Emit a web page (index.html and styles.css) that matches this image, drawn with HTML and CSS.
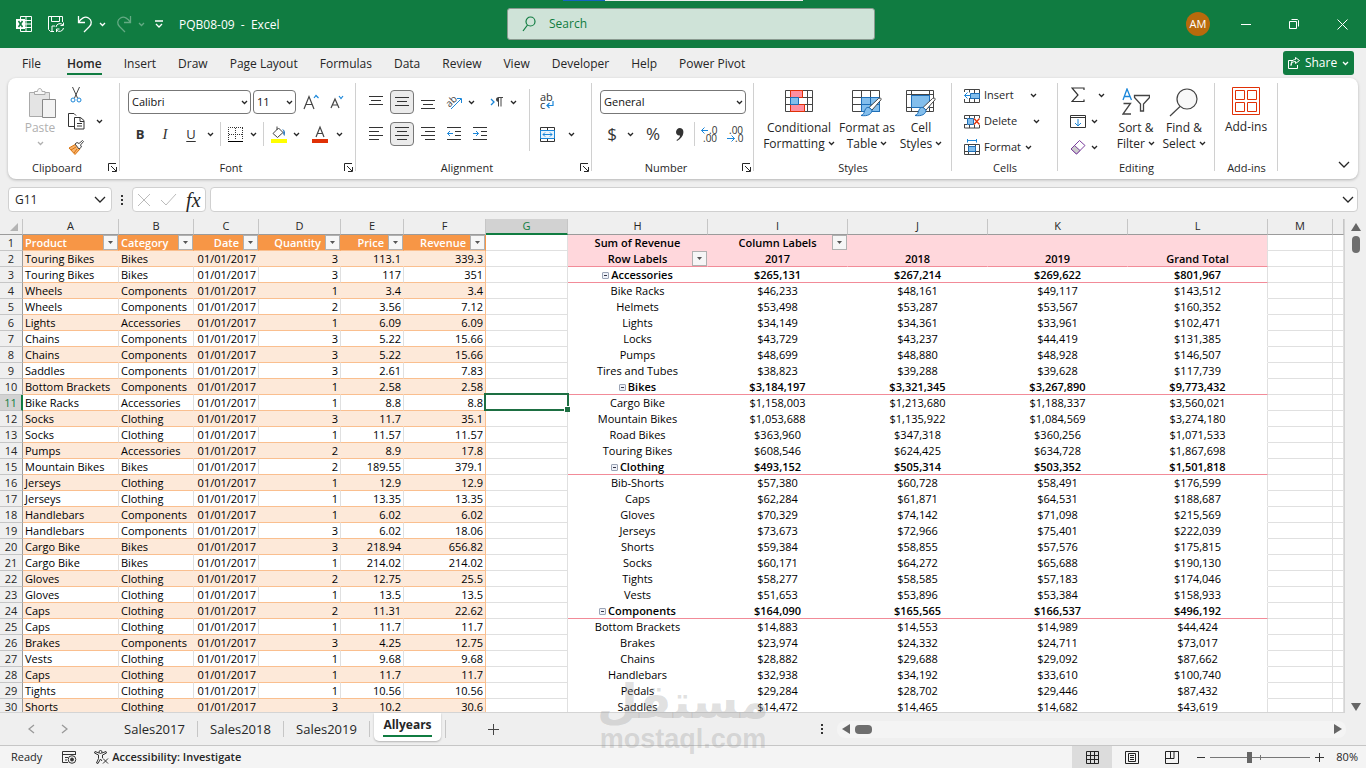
FILE: index.html
```html
<!DOCTYPE html>
<html lang="en">
<head>
    <meta charset="UTF-8">
    <meta name="viewport" content="width=device-width, initial-scale=1.0">
    <title>PQB08-09 - Excel</title>
    <link rel="stylesheet" href="styles.css">
</head>
<body>

<!-- Shared icons -->
<svg class="defs" aria-hidden="true">
    <symbol id="chev" viewBox="0 0 7 5"><path d="M1 1l2.5 2.5L6 1" fill="none" stroke="currentColor" stroke-width="1.3"/></symbol>
    <symbol id="chev-big" viewBox="0 0 12 7"><path d="M1 1l5 5 5-5" fill="none" stroke="currentColor" stroke-width="1.3"/></symbol>
    <symbol id="launch" viewBox="0 0 9 9"><path d="M.5 8V.5H8M3 3l5 5M8.500 4v4.500H4" fill="none" stroke="currentColor"/></symbol>
    <symbol id="brush" viewBox="0 0 22 20"><path d="M20 1c1 0 1.500 1 .8 2L12 13l-3-2.500L18.500 1.500z" fill="#fff" stroke="#444"/><path d="M9 10.500l3 2.500c0 4-4 6.500-11 5.500 3-1 3-3 4-5.500s2.500-3 4-2.500z" fill="#83beec" stroke="#1e6fb8"/></symbol>
</svg>

<header class="titlebar">
    <div class="screen-bar"><i></i></div>
    <div class="quick">
        <svg class="app" width="16" height="16" viewBox="0 0 16 16"><path d="M4.500 3V.5h11v15h-11V13M10 .5v15M4 4.500h11.500M4 8h11.500M4 11.500h11.500" fill="none" stroke="#fff"/><path d="M0 3h9v10H0z" fill="#fff"/><path d="M2.500 5l4 6M6.500 5l-4 6" stroke="#107c41" stroke-width="1.500"/></svg>
        <button aria-label="Save" class="save"><svg width="16" height="16" viewBox="0 0 16 16" fill="none" stroke="#fff"><path d="M6 15.500H2.500l-2-2V.5h14V6M3.500.5v5h8v-5M4 15v-5h3M8 11a4 4 0 0 1 7-2M15.500 6.500v3h-3M15.500 12a4 4 0 0 1-7 2M8.500 16v-3h3"/></svg></button>
        <button aria-label="Undo"><svg width="16" height="18" viewBox="0 0 16 18" fill="none" stroke="#fff" stroke-width="1.300"><path d="M1.500 1v6.500H8M1.500 7.500C4 3 8 1 11.500 3s3.500 6 1 8.500L7 17"/></svg></button>
        <button aria-label="Undo list" class="arrow"><svg width="7" height="5"><use href="#chev"/></svg></button>
        <button aria-label="Redo" class="faded"><svg width="16" height="18" viewBox="0 0 16 18" fill="none" stroke="#fff" stroke-width="1.300"><path d="M14.500 1v6.500H8M14.500 7.500C12 3 8 1 4.500 3s-3.500 6-1 8.500L9 17"/></svg></button>
        <button aria-label="Redo list" class="arrow faded"><svg width="7" height="5"><use href="#chev"/></svg></button>
        <button aria-label="Customize toolbar" class="customize"><svg width="8" height="8" viewBox="0 0 8 8" fill="none" stroke="#fff" stroke-width="1.300"><path d="M0 1h8M1 4l3 3 3-3"/></svg></button>
        <span class="doc-name">PQB08-09&nbsp; -&nbsp; Excel</span>
    </div>
    <label class="search">
        <svg width="14" height="16" viewBox="0 0 14 16" fill="none" stroke="#107c41" stroke-width="1.200"><circle cx="8.500" cy="5.500" r="4.500"/><path d="M5.500 9L1 15"/></svg>
        <input type="search" placeholder="Search" aria-label="Search">
    </label>
    <div class="window-tools">
        <button aria-label="Account"><span class="avatar">AM</span></button>
        <button aria-label="Minimize"><svg width="10" height="10" stroke="#fff"><path d="M0 5.500h10"/></svg></button>
        <button aria-label="Restore"><svg width="10" height="10" fill="none" stroke="#fff"><path d="M.5 2.500h7v7h-7zM2.500.5h6l1 1v6"/></svg></button>
        <button aria-label="Close"><svg width="11" height="11" stroke="#fff"><path d="M.5.5l10 10M10.500.5l-10 10"/></svg></button>
    </div>
</header>

<nav class="menu">
    <a href="#">File</a>
    <a href="#" class="current">Home</a>
    <a href="#">Insert</a>
    <a href="#">Draw</a>
    <a href="#">Page Layout</a>
    <a href="#">Formulas</a>
    <a href="#">Data</a>
    <a href="#">Review</a>
    <a href="#">View</a>
    <a href="#">Developer</a>
    <a href="#">Help</a>
    <a href="#">Power Pivot</a>
    <button class="share"><svg width="12" height="12" viewBox="0 0 12 12" fill="none" stroke="#fff"><path d="M5 3.500H.5v8h9V8M3 8.500C3.500 5.500 5 4.500 7.500 4.500V6.500L11.500 3.500 7.500.5v2C4.500 2.500 3 5 3 8.500z"/></svg>Share<svg width="7" height="5"><use href="#chev"/></svg></button>
</nav>

<section class="ribbon">
    <div class="group clipboard">
        <div class="tools">
            <button class="big disabled">
                <svg width="28" height="32" viewBox="0 0 28 32"><path d="M.5 4.500h20v24H.5z" fill="#e4e4e4" stroke="#aaa"/><path d="M5.500 6.500v-3h3C8.500-.5 13-.5 13 3.500h3v3z" fill="#f7f7f7" stroke="#aaa"/><path d="M13.500 11.500h13v18h-13z" fill="#f3f3f3" stroke="#888"/></svg>
                <span>Paste</span>
                <svg width="7" height="16"><use href="#chev"/></svg>
            </button>
            <div class="stack">
                <div><button class="icon" aria-label="Cut"><svg width="12" height="16" viewBox="0 0 12 16" fill="none" stroke="#444"><path d="M2.500 0l5 11M9.500 0l-5 11"/><g stroke="#1a86d9"><circle cx="3" cy="13" r="2"/><circle cx="9" cy="13" r="2"/></g></svg></button></div>
                <div><button class="icon" aria-label="Copy"><svg width="17" height="17" viewBox="0 0 17 17" fill="none" stroke="#333"><path d="M6 13.500H.5V.5H6l2 2M6.500 4.500h6l3.500 3v8.500H6.500zM12 4.500v4h4M9 10.500h5M9 13h5"/></svg></button><button class="arrow" aria-label="Copy options"><svg width="7" height="5"><use href="#chev"/></svg></button></div>
                <div><button class="icon" aria-label="Format Painter"><svg width="16" height="15" viewBox="0 0 16 15"><path d="M8 4l4 5-5 5.500L1 8z" fill="#f7b26b" stroke="#d9730d"/><path d="M3 10l5-3M6 13l3-4" stroke="#d9730d"/><path d="M7 4l2-1.500 2 1L14.500.5l1 1L12.500 5l1 2L11 9z" fill="#fff" stroke="#444"/></svg></button></div>
            </div>
        </div>
        <div class="caption">Clipboard<button aria-label="Clipboard settings"><svg width="9" height="9"><use href="#launch"/></svg></button></div>
    </div>

    <div class="group font">
        <div class="tools rows">
            <div class="row">
                <span class="drop face"><select aria-label="Font"><option>Calibri</option></select><svg width="7" height="5"><use href="#chev"/></svg></span>
                <span class="drop size"><select aria-label="Font size"><option>11</option></select><svg width="7" height="5"><use href="#chev"/></svg></span>
                <button class="icon grow" aria-label="Increase font size"><svg width="16" height="16" viewBox="0 0 16 16" fill="none" stroke="#444" stroke-width="1.200"><path d="M1 15L6 2.500 11 15M3 10.500h6"/><path d="M11 4l2-2.500L15.500 4" stroke="#1a86d9"/></svg></button>
                <button class="icon" aria-label="Decrease font size"><svg width="14" height="14" viewBox="0 0 14 14" fill="none" stroke="#444" stroke-width="1.200"><path d="M1 13L5 4l4 9M2.500 10h5"/><path d="M9 1l2 2.500L13 1" stroke="#1a86d9"/></svg></button>
            </div>
            <div class="row">
                <button class="icon bold">B</button>
                <button class="icon italic">I</button>
                <button class="icon under">U</button>
                <button class="arrow" aria-label="Underline style"><svg width="7" height="5"><use href="#chev"/></svg></button>
                <span class="bar"></span>
                <button class="icon tight" aria-label="Borders"><svg width="15" height="15" viewBox="0 0 15 15" fill="none" stroke="#333"><path d="M.5 13V.5H15M14.500 1v12M7.500 1v12M1 7.500h13" stroke-dasharray="1 1"/><path d="M0 14.500h15" stroke="#000"/></svg></button>
                <button class="arrow" aria-label="Border options"><svg width="7" height="5"><use href="#chev"/></svg></button>
                <span class="bar"></span>
                <button class="icon tight" aria-label="Fill color"><svg width="16" height="17" viewBox="0 0 16 17"><path d="M2 7.500L7.500 2 12 6.500 6.500 11.500zM6 4V.5" fill="#fff" stroke="#444"/><path d="M11 3c3 1 3.500 3 2.500 7-1.500-1-1.500-3-1-5z" fill="#1e6fb8"/><path d="M0 13h16v4H0z" fill="#ff0"/></svg></button>
                <button class="arrow" aria-label="Fill options"><svg width="7" height="5"><use href="#chev"/></svg></button>
                <button class="icon ink" aria-label="Font color"><svg width="16" height="17" viewBox="0 0 16 17"><path d="M4 11L8 1l4 10M5.500 7.500h5" fill="none" stroke="#444" stroke-width="1.200"/><path d="M0 13h16v4H0z" fill="#e03006"/></svg></button>
                <button class="arrow" aria-label="Font color options"><svg width="7" height="5"><use href="#chev"/></svg></button>
            </div>
        </div>
        <div class="caption">Font<button aria-label="Font settings"><svg width="9" height="9"><use href="#launch"/></svg></button></div>
    </div>

    <div class="group alignment">
        <div class="tools">
            <div class="rows">
                <div class="row">
                    <button class="icon" aria-label="Top align"><svg width="14" height="14" stroke="#333"><path d="M0 1.500h14M2 5.500h10M0 9.500h14"/></svg></button>
                    <button class="icon on" aria-label="Middle align"><svg width="14" height="14" stroke="#333"><path d="M0 2.500h14M2 6.500h10M0 10.500h14"/></svg></button>
                    <button class="icon" aria-label="Bottom align"><svg width="14" height="14" stroke="#333"><path d="M0 5.500h14M2 9.500h10M0 13.500h14"/></svg></button>
                    <button class="icon" aria-label="Orientation"><svg width="17" height="16" viewBox="0 0 17 16"><text x="0" y="11" font-size="10" fill="#444" transform="rotate(-45 5 8)">ab</text><path d="M5 15L15 5M11 4.500h4.500V9" fill="none" stroke="#1a86d9"/></svg></button>
                    <button class="arrow" aria-label="Orientation options"><svg width="7" height="5"><use href="#chev"/></svg></button>
                    <button class="icon para" aria-label="Text direction"><svg width="13" height="10" viewBox="0 0 13 10" fill="none"><path d="M1 2l3 3-3 3" stroke="#1a86d9" stroke-width="1.300"/><path d="M8.500 9.500V.5H13M11 .5v9" stroke="#444"/><path d="M9 0C5 0 5 5 9 5z" fill="#444"/></svg></button>
                    <button class="arrow" aria-label="Direction options"><svg width="7" height="5"><use href="#chev"/></svg></button>
                </div>
                <div class="row">
                    <button class="icon" aria-label="Align left"><svg width="14" height="14" stroke="#333"><path d="M0 .5h14M0 4.500h10M0 8.500h14M0 12.500h10"/></svg></button>
                    <button class="icon on" aria-label="Center"><svg width="14" height="14" stroke="#333"><path d="M0 .5h14M2 4.500h10M0 8.500h14M2 12.500h10"/></svg></button>
                    <button class="icon" aria-label="Align right"><svg width="14" height="14" stroke="#333"><path d="M0 .5h14M4 4.500h10M0 8.500h14M4 12.500h10"/></svg></button>
                    <button class="icon" aria-label="Decrease indent"><svg width="14" height="14" fill="none" stroke="#333"><path d="M0 .5h14M8 4.500h6M8 8.500h6M0 12.500h14"/><path d="M6 6.500H.5M3 4L.5 6.500 3 9" stroke="#1a86d9"/></svg></button>
                    <button class="icon" aria-label="Increase indent"><svg width="14" height="14" fill="none" stroke="#333"><path d="M0 .5h14M8 4.500h6M8 8.500h6M0 12.500h14"/><path d="M0 6.500h5.500M3 4l2.500 2.500L3 9" stroke="#1a86d9"/></svg></button>
                </div>
            </div>
            <span class="bar tall"></span>
            <div class="rows wrap-col">
                <div class="row"><button class="icon wrap" aria-label="Wrap text"><svg width="16" height="18" viewBox="0 0 16 18"><text x="1" y="8" font-size="11" fill="#333">ab</text><text x="1" y="16" font-size="11" fill="#333">c</text><path d="M14 8v4.500H8M10.500 10L8 12.500l2.500 2.500" fill="none" stroke="#1a86d9" stroke-width="1.200"/></svg></button></div>
                <div class="row"><button class="icon" aria-label="Merge and center"><svg width="15" height="15" viewBox="0 0 15 15" fill="none" stroke="#333"><path d="M.5.500h14v14H.5zM7.500.5v3M7.500 11.500v3"/><path d="M.5 3.500h14v8H.5z" fill="#e9f4fd" stroke="#1a86d9"/><path d="M3 7.500h9M5 5.500l-2 2 2 2M10 5.500l2 2-2 2" stroke="#1a86d9"/></svg></button><button class="arrow far" aria-label="Merge options"><svg width="7" height="5"><use href="#chev"/></svg></button></div>
            </div>
        </div>
        <div class="caption">Alignment<button aria-label="Alignment settings"><svg width="9" height="9"><use href="#launch"/></svg></button></div>
    </div>

    <div class="group number">
        <div class="tools rows">
            <div class="row"><span class="drop format"><select aria-label="Number format"><option>General</option></select><svg width="7" height="5"><use href="#chev"/></svg></span></div>
            <div class="row">
                <button class="icon glyph">$</button>
                <button class="arrow" aria-label="Currency options"><svg width="7" height="5"><use href="#chev"/></svg></button>
                <button class="icon glyph percent">%</button>
                <button class="icon" aria-label="Comma style"><svg width="8" height="13" viewBox="0 0 8 13"><path d="M4 0c5 0 5 9-3 13l-.5-1C3 10.500 4 9 4 7.500-1.500 8-1 0 4 0z" fill="#333"/></svg></button>
                <span class="bar thin"></span>
                <button class="icon" aria-label="Increase decimal"><svg width="16" height="17" viewBox="0 0 16 17" font-size="10" fill="#333"><text x="8" y="8">.0</text><text x="2" y="16">.00</text><path d="M7 4.500H.5M3.500 1.500l-3 3 3 3" fill="none" stroke="#1a86d9"/></svg></button>
                <button class="icon" aria-label="Decrease decimal"><svg width="16" height="17" viewBox="0 0 16 17" font-size="10" fill="#333"><text x="2" y="8">.00</text><text x="8" y="16">.0</text><path d="M0 12.500h7.500M4.500 9.500l3 3-3 3" fill="none" stroke="#1a86d9"/></svg></button>
            </div>
        </div>
        <div class="caption">Number<button aria-label="Number settings"><svg width="9" height="9"><use href="#launch"/></svg></button></div>
    </div>

    <div class="group styles">
        <div class="tools">
            <button class="big">
                <svg width="28" height="32" viewBox="0 0 28 32"><path d="M.5 2.500h27v21H.5zM.5 9.500h27M.5 16.500h27M5.500 2.500v21M12.500 2.500v21M22.500 2.500v21" fill="none" stroke="#444"/><path d="M5.500 2.500h12v7h-12zM5.500 16.500h14v7h-14z" fill="#ff8fa0" stroke="#e03006"/><path d="M5.500 9.500h8v7h-8z" fill="#83beec" stroke="#1e6fb8"/></svg>
                <span>Conditional<br>Formatting <svg width="7" height="5"><use href="#chev"/></svg></span>
            </button>
            <button class="big">
                <svg width="31" height="32" viewBox="0 0 31 32"><path d="M9.500 9.500h18v14h-18z" fill="#83beec"/><path d="M.5 2.500h27v21H.5zM.5 9.500h27M.5 16.500h27M9.500 2.500v21M18.500 2.500v21" fill="none" stroke="#444"/><path d="M9.500 9.500h18v14h-18zM9.500 16.500h18M18.500 9.500v14" fill="none" stroke="#1e6fb8"/><use href="#brush" x="8" y="9" width="22" height="20"/></svg>
                <span>Format as<br>Table <svg width="7" height="5"><use href="#chev"/></svg></span>
            </button>
            <button class="big">
                <svg width="31" height="32" viewBox="0 0 31 32"><path d="M.5 2.500h27v21H.5zM.5 6.500h27M.5 19.500h27M5.500 2.500v21M23.500 2.500v21" fill="#fff" stroke="#444"/><path d="M5.500 7.500h18v12h-18z" fill="#83beec" stroke="#1e6fb8"/><use href="#brush" x="8" y="9" width="22" height="20"/></svg>
                <span>Cell<br>Styles <svg width="7" height="5"><use href="#chev"/></svg></span>
            </button>
        </div>
        <div class="caption">Styles</div>
    </div>

    <div class="group cells">
        <div class="tools stack">
            <button><svg width="16" height="15" viewBox="0 0 16 15" fill="none" stroke="#444"><path d="M.5 4V1.500h15v13H.5V11M5.500 1.500v3M10.500 1.500v13M5.500 11v3.500M5 10.500h11"/><path d="M6.500 5.500h9v5h-9z" fill="#83beec" stroke="#1e6fb8"/><path d="M7 7.500H.5M3.500 4.500l-3 3 3 3" stroke="#1a86d9"/></svg>Insert<svg class="far" width="7" height="5"><use href="#chev"/></svg></button>
            <button><svg width="16" height="15" viewBox="0 0 16 15" fill="none" stroke="#444"><path d="M.5 4V1.500h15V4M.5 10.500v3.500h15v-3M5.500 1.500V4M10.500 1.500V4M5.500 11v3M10.500 11v3M0 4.500h3M0 10.500h3"/><path d="M3.500 4.500h6v6h-6z" fill="#83beec" stroke="#1e6fb8"/><path d="M10 4.500l5.500 6M15.500 4.500l-5.500 6" stroke="#e03006" stroke-width="1.300"/></svg>Delete<svg class="far" width="7" height="5"><use href="#chev"/></svg></button>
            <button><svg width="16" height="16" viewBox="0 0 16 16" fill="none" stroke="#444"><path d="M.5 5.500h15v10H.5zM4.500 5v11M11.500 5v11M0 12.500h16"/><path d="M4.500 7.500h7v5h-7z" fill="#83beec" stroke="#1e6fb8"/><path d="M3.500 0v3.500M12.500 0v3.500M3.500 1.500h9" stroke="#1a86d9"/></svg>Format<svg width="7" height="5"><use href="#chev"/></svg></button>
        </div>
        <div class="caption">Cells</div>
    </div>

    <div class="group editing">
        <div class="tools">
            <div class="stack">
                <button class="sum" aria-label="AutoSum"><svg width="14" height="16" viewBox="0 0 14 16" fill="none" stroke="#333" stroke-width="1.200"><path d="M13 3V1H1l6 7-6 6.500h12v-2"/></svg><svg width="7" height="5"><use href="#chev"/></svg></button>
                <button aria-label="Fill"><svg width="16" height="15" viewBox="0 0 16 15" fill="none" stroke="#333"><path d="M.5 1.500h15v12H.5zM.5 3.500h15"/><path d="M8 5v7M5 9l3 3 3-3" stroke="#1a86d9"/></svg><svg width="7" height="5"><use href="#chev"/></svg></button>
                <button aria-label="Clear"><svg width="16" height="15" viewBox="0 0 16 15" fill="#fff" stroke="#7a3e9d"><path d="M9.500.5L15 5.500 6.500 14 1 9z"/><path d="M4.500 5.500L10 10.500 6.500 14 1 9z" fill="#ccc"/></svg><svg width="7" height="5"><use href="#chev"/></svg></button>
            </div>
            <button class="big">
                <svg width="28" height="32" viewBox="0 0 28 32" fill="none" stroke="#444" stroke-width="1.300"><path d="M1 12L5 1l4.500 11M2.500 8.500h5.500" stroke="#1a86d9"/><path d="M1.500 15.500h7L1 26h8M12.500 7.500h15v2L21.500 16v7h-3v-7l-6-6.500z"/></svg>
                <span>Sort &amp;<br>Filter <svg width="7" height="5"><use href="#chev"/></svg></span>
            </button>
            <button class="big">
                <svg width="30" height="32" viewBox="0 0 30 32" fill="none" stroke="#444" stroke-width="1.200"><circle cx="18" cy="11" r="10" fill="#f8f8f8"/><path d="M11 18.500L1 28"/></svg>
                <span>Find &amp;<br>Select <svg width="7" height="5"><use href="#chev"/></svg></span>
            </button>
        </div>
        <div class="caption">Editing</div>
    </div>

    <div class="group addins">
        <div class="tools">
            <button class="big">
                <svg width="28" height="32" viewBox="0 0 28 32" fill="none" stroke="#e03006"><path d="M.5.5h27v27H.5zM3.500 3.500h9v9h-9zM15.500 3.500h9v9h-9zM3.500 15.500h9v9h-9zM15.500 15.500h9v9h-9z"/></svg>
                <span>Add-ins</span>
            </button>
        </div>
        <div class="caption">Add-ins</div>
    </div>
    <button class="collapse" aria-label="Collapse ribbon"><svg width="12" height="7"><use href="#chev-big"/></svg></button>
</section>

<section class="formula">
    <label class="name-box"><input type="text" value="G11" aria-label="Name box"><svg width="12" height="7"><use href="#chev-big"/></svg></label>
    <span class="dots"><i></i><i></i><i></i></span>
    <div class="entry">
        <button aria-label="Cancel"><svg width="14" height="14" stroke="#bbb"><path d="M1 1l12 12M13 1L1 13"/></svg></button>
        <button aria-label="Enter"><svg width="17" height="13" fill="none" stroke="#bbb"><path d="M1 7l5 5L16 1"/></svg></button>
        <button class="fx">fx</button>
    </div>
    <label class="formula-box"><input type="text" aria-label="Formula"><svg width="12" height="7"><use href="#chev-big"/></svg></label>
</section>

<main class="workbook">
    <div class="sheet">
        <table>
            <colgroup>
                <col class="c-num"><col class="c-a"><col class="c-b"><col class="c-c"><col class="c-d"><col class="c-e"><col class="c-d"><col class="c-d">
                <col class="c-pivot"><col class="c-pivot"><col class="c-pivot"><col class="c-pivot"><col class="c-pivot"><col class="c-c"><col>
            </colgroup>
            <thead>
                <tr>
                    <th class="corner"><svg width="8" height="8"><path d="M8 0v8H0z" fill="#b4b4b4"/></svg></th>
                    <th>A</th><th>B</th><th>C</th><th>D</th><th>E</th><th>F</th><th class="active">G</th>
                    <th>H</th><th>I</th><th>J</th><th>K</th><th>L</th><th>M</th><th></th>
                </tr>
            </thead>
            <tbody id="cells"></tbody>
        </table>
    </div>
    <div class="vscroll">
        <svg width="10" height="8"><path d="M5 0l5 8H0z" fill="#666"/></svg>
        <span class="thumb"></span>
        <svg class="end" width="10" height="8"><path d="M0 0h10L5 8z" fill="#666"/></svg>
    </div>
</main>

<footer class="tabs">
    <button class="step" aria-label="Previous sheet"><svg width="7" height="10" fill="none" stroke="#999" stroke-width="1.300"><path d="M6 1L1 5l5 4"/></svg></button>
    <button class="step" aria-label="Next sheet"><svg width="7" height="10" fill="none" stroke="#999" stroke-width="1.300"><path d="M1 1l5 4-5 4"/></svg></button>
    <div class="sheet-tabs">
        <a href="#">Sales2017</a>
        <a href="#">Sales2018</a>
        <a href="#">Sales2019</a>
        <a href="#" class="current"><span>Allyears</span></a>
        <i class="tab-end"></i>
    </div>
    <button class="add" aria-label="New sheet"><svg width="11" height="11" stroke="#444"><path d="M5.500 0v11M0 5.500h11"/></svg></button>
    <span class="dots"><i></i><i></i><i></i></span>
    <div class="hscroll">
        <svg width="8" height="10"><path d="M8 0v10L0 5z" fill="#666"/></svg>
        <span class="thumb"></span>
        <svg class="end" width="8" height="10"><path d="M0 0v10l8-5z" fill="#666"/></svg>
    </div>
</footer>

<footer class="status">
    <span>Ready</span>
    <svg class="macro" width="15" height="13" viewBox="0 0 15 13" fill="none" stroke="#333"><path d="M6 11.500H.5V.5h13V4M.5 3.500h13M3 6.500h3M3 9h2"/><circle cx="10" cy="8.500" r="3.800"/><circle cx="10" cy="8.500" r="1.500" fill="#333"/></svg>
    <svg width="15" height="14" viewBox="0 0 15 14" fill="none" stroke="#333"><circle cx="6.500" cy="2" r="1.500"/><path d="M5 3L1 1.500.5 3 4.500 5v3.500L2.500 13l1.500.5L6.500 9l1.500 2M8 3l4-1.500.5 1.500L8.500 5v3M9 8.500l5 5M14 8.500l-5 5"/></svg>
    <b>Accessibility: Investigate</b>
    <div class="views">
        <button class="on" aria-label="Normal view"><svg width="13" height="13" fill="none" stroke="#222"><path d="M.5.5h12v12H.5zM4.500 0v13M8.500 0v13M0 4.500h13M0 8.500h13"/></svg></button>
        <button aria-label="Page layout view"><svg width="14" height="13" fill="none" stroke="#222"><path d="M.5.5h13v12H.5zM3.500 2.500h7v8h-7zM5 4.500h4M5 6.500h4M5 8.500h4"/></svg></button>
        <button aria-label="Page break view"><svg width="14" height="13" fill="none" stroke="#222"><path d="M.5.5h13v12H.5zM.5 7.500h8.500v-7M5.500.5v7"/></svg></button>
    </div>
    <button class="zoom" aria-label="Zoom out"><svg width="8" height="9" stroke="#333"><path d="M0 4.500h8"/></svg></button>
    <input type="range" min="0" max="100" value="39" aria-label="Zoom">
    <button class="zoom" aria-label="Zoom in"><svg width="9" height="9" stroke="#333"><path d="M0 4.500h9M4.500 0v9"/></svg></button>
    <span class="percent">80%</span>
</footer>

<div class="watermark"><span lang="ar">مستقل</span><span>mostaql.com</span></div>

<script src="sheet.js"></script>
</body>
</html>
```
FILE: styles.css
```css
* {
    box-sizing: border-box;
}
body {
    margin: 0;
    height: 100vh;
    display: flex;
    flex-direction: column;
    overflow: hidden;
    background-color: #efefef;
    color: #262626;
    font-family: "Open Sans", "Noto Sans", sans-serif;
    font-size: 12px;
    line-height: 16px;
}
button, input, select {
    font: inherit;
    color: inherit;
    padding: 0;
    border: none;
    background: none;
}
button {
    display: flex;
    align-items: center;
    justify-content: center;
    flex: none;
}
svg {
    flex: none;
}
a {
    color: inherit;
    text-decoration: none;
}
.defs {
    position: absolute;
    width: 0;
    height: 0;
}

/* Title bar */
.titlebar {
    position: relative;
    flex: none;
    display: flex;
    align-items: center;
    height: 48px;
    background-color: #107c41;
    color: #fff;
}
.screen-bar {
    position: absolute;
    top: 0;
    left: calc(50% - 120px);
    width: 240px;
    height: 1px;
    background-color: #eee;
}
.screen-bar i {
    display: block;
    width: 42px;
    height: 1px;
    background-color: #1565c0;
}
.quick {
    flex: 1 1 16px;
    display: flex;
    align-items: center;
    padding-left: 16px;
}
.quick .save {
    margin: 0 13px 0 16px;
}
.quick .arrow {
    width: 19px;
}
.quick .arrow + button {
    margin-left: 4px;
}
.quick .faded {
    opacity: 0.35;
}
.quick .customize {
    margin: 0 16px 0 7px;
}
.doc-name {
    padding-top: 2px;
}
.search {
    flex: none;
    display: flex;
    align-items: center;
    width: 368px;
    height: 32px;
    padding-left: 14px;
    border: 1px solid #8a9a90;
    border-radius: 3px;
    background-color: #cfe3d8;
}
.search input {
    flex: 1;
    margin-left: 13px;
    outline: none;
}
.search input::placeholder {
    color: #107c41;
}
.window-tools {
    flex: 1 1 0;
    display: flex;
    justify-content: flex-end;
}
.window-tools button {
    width: 48px;
    height: 48px;
}
.avatar {
    width: 24px;
    height: 24px;
    border-radius: 50%;
    background-color: #b86a0c;
    font-size: 11px;
    line-height: 24px;
}

/* Menu */
.menu {
    flex: none;
    display: flex;
    align-items: flex-start;
    height: 30px;
    padding: 8px 12px 0 11px;
}
.menu a {
    margin: 0 11px;
    height: 19px;
}
.menu a:first-child {
    margin-right: 15px;
}
.menu .current {
    font-weight: 600;
    border-bottom: 2px solid #107c41;
}
.share {
    gap: 5px;
    width: 71px;
    height: 24px;
    margin: -5px 0 0 auto;
    border-radius: 3px;
    background-color: #107c41;
    color: #fff;
}

/* Ribbon */
.ribbon {
    flex: none;
    display: flex;
    height: 101px;
    margin: 0 8px;
    border-radius: 8px;
    background-color: #fff;
    box-shadow: 0 1px 3px rgba(0,0,0,0.25);
}
.group {
    flex: none;
    display: flex;
    flex-direction: column;
    position: relative;
    padding-top: 4px;
}
.group::after {
    content: "";
    position: absolute;
    right: 0;
    top: 5px;
    bottom: 8px;
    border-right: 1px solid #d0d0d0;
}
.clipboard { width: 112px; }
.font { width: 236px; }
.alignment { width: 236px; }
.number { width: 162px; }
.styles { width: 198px; }
.cells { width: 106px; }
.editing { width: 157px; }
.addins { width: 63px; }
.tools {
    flex: 1;
    display: flex;
}
.tools.stack, .tools.rows {
    flex-direction: column;
}
.rows {
    display: flex;
    flex-direction: column;
    gap: 8px;
    padding-top: 8px;
}
.font .rows, .number .rows {
    padding-left: 8px;
}
.row {
    display: flex;
    align-items: center;
    height: 24px;
}
.caption {
    height: 19px;
    padding-right: 14px;
    text-align: center;
    font-size: 11px;
    line-height: 16px;
}
.styles .caption, .cells .caption, .editing .caption, .addins .caption {
    padding-right: 0;
}
.caption button {
    position: absolute;
    right: 3px;
    bottom: 7px;
}
.icon {
    width: 26px;
    height: 24px;
    color: #333;
}
.icon svg {
    overflow: visible;
}
.icon.tight {
    width: 23px;
}
.icon.on {
    width: 24px;
    margin: 0 1px;
    border: 1px solid #777;
    border-radius: 4px;
    background-color: #ebebeb;
}
.arrow {
    width: 13px;
    height: 24px;
}
.bar {
    width: 1px;
    height: 24px;
    margin: 0 3px;
    background-color: #d0d0d0;
}
.bar.tall {
    height: 62px;
    margin: 7px 3px 0 12px;
}
.bold {
    font-weight: 700;
    font-size: 13px;
}
.font .bold {
    width: 24px;
}
.italic {
    font-family: "Liberation Serif", serif;
    font-style: italic;
    font-size: 15px;
}
.under {
    text-decoration: underline;
    text-underline-offset: 2px;
    font-size: 13px;
}
.font .ink {
    margin-left: 4px;
}
.drop {
    position: relative;
    height: 24px;
    margin-right: 2px;
}
.drop select {
    appearance: none;
    width: 100%;
    height: 24px;
    padding-left: 3px;
    border: 1px solid #777;
    border-radius: 4px;
    background-color: #fff;
    color: #111;
    font-size: 11px;
}
.drop svg {
    position: absolute;
    right: 3px;
    top: 10px;
}
.drop.face { width: 123px; }
.drop.size { width: 43px; }
.drop.format { width: 146px; }
.stack {
    display: flex;
    flex-direction: column;
}
.stack > * {
    display: flex;
    align-items: center;
    justify-content: flex-start;
    height: 26px;
}
.big {
    flex-direction: column;
    justify-content: flex-start;
    padding-top: 6px;
    height: 70px;
}
.disabled {
    color: #b0b0b0;
}
.clipboard .big {
    width: 48px;
    margin-left: 8px;
}
.clipboard .stack {
    margin-left: -1px;
}
.clipboard .disabled svg:last-child {
    height: 5px;
    margin-top: 5px;
}
.clipboard .big > svg:first-child {
    margin-left: 6px;
}
.clipboard .arrow {
    margin-left: 4px;
}
.alignment .tools {
    padding-left: 7px;
}
.alignment .arrow {
    width: 8px;
}
.alignment .para {
    margin-left: 8px;
}
.wrap-col {
    padding-left: 1px;
}
.wrap-col .far {
    margin-left: 7px;
}
.glyph {
    width: 24px;
    font-size: 17px;
}
.number .percent {
    width: 28px;
    margin-left: 2px;
}
.number .bar {
    margin: 0 1px;
}
.styles .tools {
    padding-left: 8px;
}
.styles .big:nth-child(1) { width: 74px; }
.styles .big:nth-child(2) { width: 62px; }
.styles .big:nth-child(3) { width: 46px; }
.cells .stack {
    padding-left: 12px;
}
.cells .stack button {
    gap: 4px;
    font-size: 11px;
}
.cells .far {
    margin-left: 12px;
}
.big span {
    font-size: 12px;
}
.big span svg {
    vertical-align: 2px;
}
.editing .stack {
    width: 54px;
    padding-left: 12px;
}
.editing .stack button {
    gap: 5px;
}
.editing .stack .sum {
    gap: 13px;
    padding-left: 1px;
}
.editing .big {
    width: 48px;
}
.addins .big {
    width: 62px;
    padding-top: 5px;
}
.collapse {
    align-self: flex-end;
    margin: 0 8px 11px auto;
}

/* Formula bar */
.formula {
    flex: none;
    display: flex;
    align-items: stretch;
    height: 25px;
    margin: 8px 8px 7px 8px;
}
.name-box, .entry, .formula-box {
    display: flex;
    align-items: center;
    border: 1px solid #d0d0d0;
    border-radius: 4px;
    background-color: #fff;
}
.name-box {
    width: 104px;
    padding: 0 5px 0 6px;
}
.name-box input, .formula-box input {
    flex: 1;
    min-width: 0;
    outline: none;
}
.dots {
    display: flex;
    flex-direction: column;
    align-items: center;
    justify-content: center;
    gap: 2px;
    width: 20px;
}
.dots i {
    width: 2px;
    height: 2px;
    background-color: #333;
}
.entry {
    width: 74px;
    margin-right: 4px;
    justify-content: space-around;
}
.fx {
    font-family: "Liberation Serif", serif;
    font-style: italic;
    font-size: 20px;
}
.formula-box {
    flex: 1;
    padding-right: 3px;
}

/* Sheet */
.workbook {
    flex: 1;
    min-height: 0;
    display: flex;
}
.sheet {
    flex: 1;
    overflow: hidden;
    border-right: 1px solid #d4d4d4;
    border-bottom: 1px solid #d4d4d4;
    background-color: #fff;
}
table {
    width: 100%;
    table-layout: fixed;
    border-collapse: separate;
    border-spacing: 0;
    color: #000;
    font-size: 11px;
    line-height: 15px;
}
.c-num { width: 23px; }
.c-a { width: 96px; }
.c-b { width: 75px; }
.c-c { width: 65px; }
.c-d { width: 82px; }
.c-e { width: 63px; }
.c-pivot { width: 140px; }
th, td {
    position: relative;
    height: 16px;
    padding: 0 2px;
    border-right: 1px solid #e0e0e0;
    border-bottom: 1px solid #e0e0e0;
    white-space: nowrap;
}
thead th, .num {
    padding: 0;
    background-color: #efefef;
    border-color: #c6c6c6;
    font-weight: 400;
    color: #262626;
}
thead th {
    border-bottom-color: #9b9b9b;
    line-height: 14px;
    vertical-align: top;
}
.num {
    border-right-color: #9b9b9b;
    text-align: center;
}
.corner svg {
    display: block;
    margin: 4px 4px 0 auto;
}
thead .active {
    background-color: #d2d2d2;
    border-bottom: 2px solid #107c41;
    color: #107c41;
}
.num.active {
    background-color: #d2d2d2;
    border-right: 2px solid #107c41;
    color: #107c41;
}
.data {
    border-bottom-color: #fabf8f;
}
.data.last {
    border-right-color: #fabf8f;
}
.band {
    background-color: #fde9d9;
    border-right-color: #fde9d9;
}
.head {
    background-color: #f79646;
    border-right-color: #f79646;
    color: #fff;
    font-weight: 600;
}
.right {
    text-align: right;
}
.head.right {
    padding-right: 19px;
}
.pivot {
    border-color: #fff;
    text-align: center;
}
.pivot.top {
    background-color: #ffd7dc;
    border-color: #ffd7dc;
}
.pivot.strong {
    font-weight: 600;
}
.pivot.line {
    border-bottom-color: #f28b98;
}
.pivot.line:not(.top):not(.edge) {
    border-right-width: 0;
    padding-right: 3px;
}
.pivot.edge {
    border-right-color: #e0e0e0;
}
.filter {
    position: absolute;
    right: 0;
    top: 0;
    width: 15px;
    height: 15px;
    border: 1px solid #b0b0b0;
    background-color: #f6f6f6;
}
.fold {
    display: inline-flex;
    width: 7px;
    height: 7px;
    margin: -1px 2px 0 0;
    border: 1px solid #9aa3b5;
    border-radius: 1px;
    background-color: #eef1f8;
    vertical-align: middle;
}
.fold::after {
    content: "";
    width: 3px;
    height: 1px;
    background-color: #334;
}
.cursor {
    position: absolute;
    z-index: 1;
    inset: -2px -2px -1px -2px;
    border: 2px solid #1d6f42;
}
.cursor::after {
    content: "";
    position: absolute;
    right: -3px;
    bottom: -3px;
    width: 5px;
    height: 5px;
    border: solid #fff;
    border-width: 1px 0 0 1px;
    box-sizing: content-box;
    background-color: #1d6f42;
}
.vscroll {
    width: 21px;
    display: flex;
    flex-direction: column;
    align-items: center;
    padding: 4px 0 2px 0;
}
.vscroll .thumb {
    width: 8px;
    height: 17px;
    margin-top: 5px;
}
.thumb {
    border-radius: 4px;
    background-color: #6e6e6e;
}
.vscroll .end {
    margin-top: auto;
}

/* Sheet tabs */
.tabs {
    flex: none;
    display: flex;
    align-items: center;
    height: 32px;
    padding: 0 20px 0 15px;
}
.step {
    width: 33px;
    height: 24px;
}
.sheet-tabs {
    display: flex;
    align-items: center;
    align-self: stretch;
    margin-left: 31px;
    font-size: 13px;
}
.sheet-tabs a {
    width: 86px;
    border-right: 1px solid #c6c6c6;
    text-align: center;
}
.sheet-tabs .current {
    width: 67px;
    align-self: flex-start;
    height: 28px;
    margin: 0 4px 0 4px;
    padding-top: 4px;
    border-right: none;
    border-radius: 0 0 5px 5px;
    background-color: #fff;
    box-shadow: 0 1px 2px rgba(0,0,0,0.25);
    font-size: 12px;
    font-weight: 700;
}
.sheet-tabs .current span {
    display: inline-block;
    height: 20px;
    border-bottom: 2px solid #107c41;
}
.tab-end {
    width: 1px;
    height: 18px;
    background-color: #c6c6c6;
}
.add {
    width: 95px;
    height: 24px;
}
.tabs .dots {
    margin-left: auto;
}
.hscroll {
    display: flex;
    align-items: center;
    width: 509px;
    height: 17px;
    margin-left: 5px;
    padding: 0 4px 0 5px;
    border-radius: 8px;
    background-color: #f4f4f4;
}
.hscroll .thumb {
    width: 17px;
    height: 9px;
    margin-left: 5px;
}
.hscroll .end {
    margin-left: auto;
}

/* Status bar */
.status {
    flex: none;
    display: flex;
    align-items: center;
    height: 23px;
    padding-left: 11px;
    border-top: 1px solid #c6c6c6;
    background-color: #f4f4f4;
    font-size: 11px;
}
.status .macro {
    margin: 0 17px 0 20px;
}
.status b {
    margin-left: 3px;
    font-weight: 600;
}
.views {
    display: flex;
    margin-left: auto;
}
.views button {
    width: 40px;
    height: 22px;
}
.views .on {
    background-color: #dcdcdc;
}
.zoom {
    width: 18px;
    height: 22px;
}
.status input {
    appearance: none;
    width: 100px;
    height: 11px;
    margin: 0;
    background: linear-gradient(#777, #777) center / 100% 1px no-repeat, linear-gradient(#777, #777) center / 1px 5px no-repeat;
}
.status input::-webkit-slider-thumb {
    appearance: none;
    width: 5px;
    height: 11px;
    background-color: #666;
}
.status .percent {
    width: 38px;
    padding-right: 8px;
    text-align: right;
}

.watermark {
    position: absolute;
    left: calc(50% - 83px);
    bottom: 14px;
    display: flex;
    flex-direction: column;
    align-items: center;
    width: 166px;
    color: rgba(150,150,150,0.3);
    font-family: "Liberation Sans", sans-serif;
    font-size: 27px;
    font-weight: 700;
    line-height: 30px;
    pointer-events: none;
}
.watermark span:first-child {
    font-family: "DejaVu Sans", sans-serif;
    font-size: 47px;
    line-height: 44px;
}
```
FILE: sheet.js
```javascript
const headers = ['Product', 'Category', 'Date', 'Quantity', 'Price', 'Revenue'];

// product, category, quantity, price, revenue
const sales = [
    ['Touring Bikes', 'Bikes', 3, '113.1', '339.3'],
    ['Touring Bikes', 'Bikes', 3, '117', '351'],
    ['Wheels', 'Components', 1, '3.4', '3.4'],
    ['Wheels', 'Components', 2, '3.56', '7.12'],
    ['Lights', 'Accessories', 1, '6.09', '6.09'],
    ['Chains', 'Components', 3, '5.22', '15.66'],
    ['Chains', 'Components', 3, '5.22', '15.66'],
    ['Saddles', 'Components', 3, '2.61', '7.83'],
    ['Bottom Brackets', 'Components', 1, '2.58', '2.58'],
    ['Bike Racks', 'Accessories', 1, '8.8', '8.8'],
    ['Socks', 'Clothing', 3, '11.7', '35.1'],
    ['Socks', 'Clothing', 1, '11.57', '11.57'],
    ['Pumps', 'Accessories', 2, '8.9', '17.8'],
    ['Mountain Bikes', 'Bikes', 2, '189.55', '379.1'],
    ['Jerseys', 'Clothing', 1, '12.9', '12.9'],
    ['Jerseys', 'Clothing', 1, '13.35', '13.35'],
    ['Handlebars', 'Components', 1, '6.02', '6.02'],
    ['Handlebars', 'Components', 3, '6.02', '18.06'],
    ['Cargo Bike', 'Bikes', 3, '218.94', '656.82'],
    ['Cargo Bike', 'Bikes', 1, '214.02', '214.02'],
    ['Gloves', 'Clothing', 2, '12.75', '25.5'],
    ['Gloves', 'Clothing', 1, '13.5', '13.5'],
    ['Caps', 'Clothing', 2, '11.31', '22.62'],
    ['Caps', 'Clothing', 1, '11.7', '11.7'],
    ['Brakes', 'Components', 3, '4.25', '12.75'],
    ['Vests', 'Clothing', 1, '9.68', '9.68'],
    ['Caps', 'Clothing', 1, '11.7', '11.7'],
    ['Tights', 'Clothing', 1, '10.56', '10.56'],
    ['Shorts', 'Clothing', 3, '10.2', '30.6']
];

// A leading * marks a category total
const pivot = [
    ['Sum of Revenue', 'Column Labels', '', '', ''],
    ['Row Labels', '2017', '2018', '2019', 'Grand Total'],
    ['*Accessories', '$265,131', '$267,214', '$269,622', '$801,967'],
    ['Bike Racks', '$46,233', '$48,161', '$49,117', '$143,512'],
    ['Helmets', '$53,498', '$53,287', '$53,567', '$160,352'],
    ['Lights', '$34,149', '$34,361', '$33,961', '$102,471'],
    ['Locks', '$43,729', '$43,237', '$44,419', '$131,385'],
    ['Pumps', '$48,699', '$48,880', '$48,928', '$146,507'],
    ['Tires and Tubes', '$38,823', '$39,288', '$39,628', '$117,739'],
    ['*Bikes', '$3,184,197', '$3,321,345', '$3,267,890', '$9,773,432'],
    ['Cargo Bike', '$1,158,003', '$1,213,680', '$1,188,337', '$3,560,021'],
    ['Mountain Bikes', '$1,053,688', '$1,135,922', '$1,084,569', '$3,274,180'],
    ['Road Bikes', '$363,960', '$347,318', '$360,256', '$1,071,533'],
    ['Touring Bikes', '$608,546', '$624,425', '$634,728', '$1,867,698'],
    ['*Clothing', '$493,152', '$505,314', '$503,352', '$1,501,818'],
    ['Bib-Shorts', '$57,380', '$60,728', '$58,491', '$176,599'],
    ['Caps', '$62,284', '$61,871', '$64,531', '$188,687'],
    ['Gloves', '$70,329', '$74,142', '$71,098', '$215,569'],
    ['Jerseys', '$73,673', '$72,966', '$75,401', '$222,039'],
    ['Shorts', '$59,384', '$58,855', '$57,576', '$175,815'],
    ['Socks', '$60,171', '$64,272', '$65,688', '$190,130'],
    ['Tights', '$58,277', '$58,585', '$57,183', '$174,046'],
    ['Vests', '$51,653', '$53,896', '$53,384', '$158,933'],
    ['*Components', '$164,090', '$165,565', '$166,537', '$496,192'],
    ['Bottom Brackets', '$14,883', '$14,553', '$14,989', '$44,424'],
    ['Brakes', '$23,974', '$24,332', '$24,711', '$73,017'],
    ['Chains', '$28,882', '$29,688', '$29,092', '$87,662'],
    ['Handlebars', '$32,938', '$34,192', '$33,610', '$100,740'],
    ['Pedals', '$29,284', '$28,702', '$29,446', '$87,432'],
    ['Saddles', '$14,472', '$14,465', '$14,682', '$43,619']
];

const filter = '<button class="filter" aria-label="Filter"><svg width="5" height="3"><path d="M0 0h5L2.500 3z" fill="#555"/></svg></button>';

function salesCells(row) {
    if (row === 1) {
        return headers.map((text, i) => `<td class="data head ${i > 1 ? 'right' : ''}">${text}${filter}</td>`).join('');
    }
    const [product, category, quantity, price, revenue] = sales[row - 2];
    const values = [product, category, '01/01/2017', quantity, price, revenue];
    return values.map((text, i) => {
        const names = ['data'];
        if (row % 2 === 0) names.push('band');
        if (i > 1) names.push('right');
        if (i === 5) names.push('last');
        return `<td class="${names.join(' ')}">${text}</td>`;
    }).join('');
}

function pivotCells(row) {
    const values = pivot[row - 1];
    const total = values[0].startsWith('*');
    return values.map((text, i) => {
        const names = ['pivot'];
        if (row < 3) names.push('top');
        if (row < 3 || total) names.push('strong');
        if (row === 2 || total) names.push('line');
        if (i === 4) names.push('edge');
        if (text.startsWith('*')) text = '<button class="fold" aria-label="Collapse"></button>' + text.slice(1);
        if ((row === 1 && i === 1) || (row === 2 && i === 0)) text += filter;
        return `<td class="${names.join(' ')}">${text}</td>`;
    }).join('');
}

let html = '';
for (let row = 1; row <= 30; row++) {
    const active = row === 11;
    html += `<tr><th class="num ${active ? 'active' : ''}">${row}</th>`
        + salesCells(row)
        + `<td>${active ? '<div class="cursor"></div>' : ''}</td>`
        + pivotCells(row)
        + '<td></td><td></td></tr>';
}
document.getElementById('cells').innerHTML = html;
```
